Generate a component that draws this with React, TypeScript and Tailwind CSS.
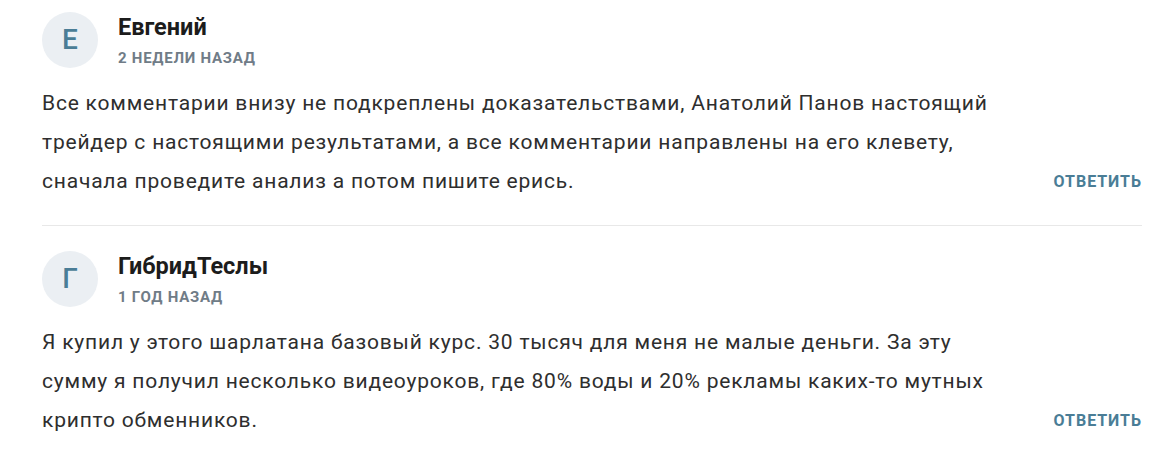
const comments = [
  {
    letter: 'Е',
    name: 'Евгений',
    time: '2 недели назад',
    text: 'Все комментарии внизу не подкреплены доказательствами, Анатолий Панов настоящий трейдер с настоящими результатами, а все комментарии направлены на его клевету, сначала проведите анализ а потом пишите ерись.',
  },
  {
    letter: 'Г',
    name: 'ГибридТеслы',
    time: '1 год назад',
    text: 'Я купил у этого шарлатана базовый курс. 30 тысяч для меня не малые деньги. За эту сумму я получил несколько видеоуроков, где 80% воды и 20% рекламы каких-то мутных крипто обменников.',
  },
];

export default function App() {
  return (
    <div className="min-h-[450px] bg-white pl-[42px] pr-[26px] font-['Roboto',sans-serif]">
      {comments.map((c, i) => (
        <div
          key={i}
          className={
            i === 0
              ? 'border-b border-[#e8e8e8] pt-3 pb-6'
              : 'pt-[25px] pb-6'
          }
        >
          <div className="flex items-center gap-5">
            <div className="flex h-14 w-14 items-center justify-center rounded-full bg-[#ebeff3] text-[28px] font-medium text-[#4a7d96]">
              {c.letter}
            </div>
            <div className="flex flex-col">
              <span className="text-[23.5px] leading-7 font-bold text-[#1c1c1c]">
                {c.name}
              </span>
              <span className="mt-[7px] text-[15px] leading-5 font-bold uppercase tracking-[0.05em] text-[#707c87]">
                {c.time}
              </span>
            </div>
          </div>
          <div className="mt-4 flex items-end justify-between gap-6">
            <p className="max-w-[975px] text-[21px] leading-[39px] tracking-[0.8px] text-[#2e2e2e]">
              {c.text}
            </p>
            <button className="mb-[9px] shrink-0 text-[16px] leading-5 font-bold uppercase tracking-[0.06em] text-[#4a7d96]">
              Ответить
            </button>
          </div>
        </div>
      ))}
    </div>
  );
}
